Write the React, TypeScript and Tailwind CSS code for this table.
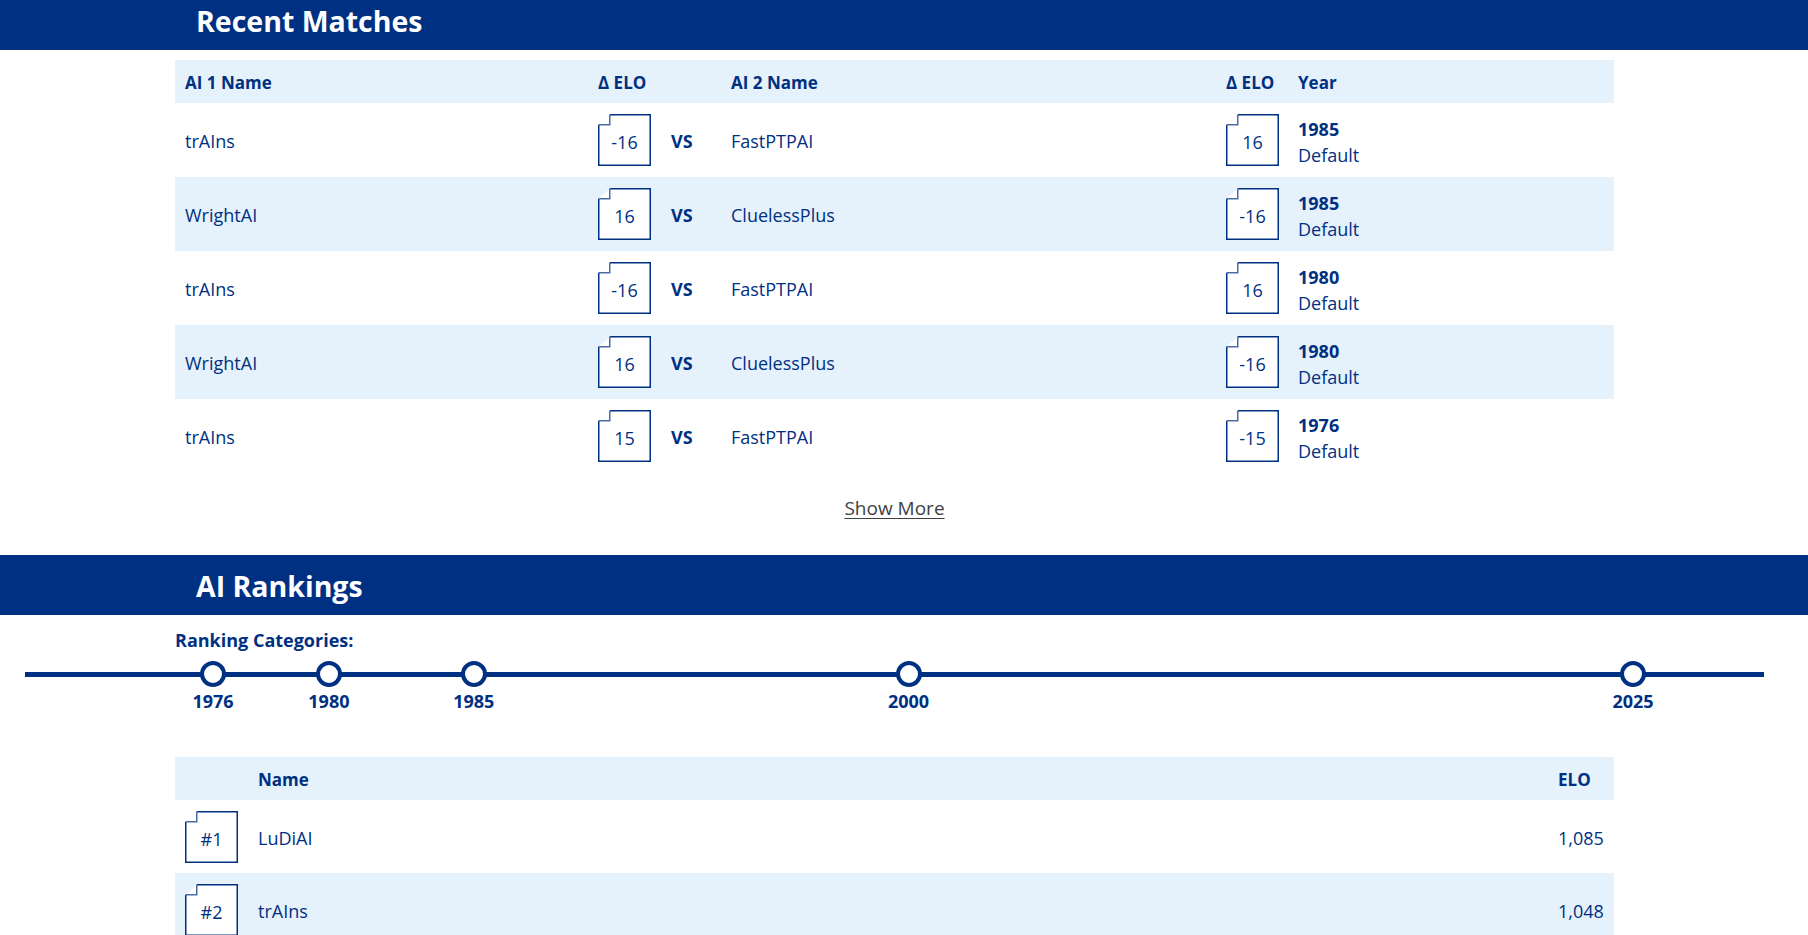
import React from 'react';

type Match = {
  ai1: string;
  d1: number;
  ai2: string;
  d2: number;
  year: number;
  category: string;
};

const matches: Match[] = [
  { ai1: 'trAIns', d1: -16, ai2: 'FastPTPAI', d2: 16, year: 1985, category: 'Default' },
  { ai1: 'WrightAI', d1: 16, ai2: 'CluelessPlus', d2: -16, year: 1985, category: 'Default' },
  { ai1: 'trAIns', d1: -16, ai2: 'FastPTPAI', d2: 16, year: 1980, category: 'Default' },
  { ai1: 'WrightAI', d1: 16, ai2: 'CluelessPlus', d2: -16, year: 1980, category: 'Default' },
  { ai1: 'trAIns', d1: 15, ai2: 'FastPTPAI', d2: -15, year: 1976, category: 'Default' },
];

const rankings = [
  { name: 'LuDiAI', elo: 1085 },
  { name: 'trAIns', elo: 1048 },
];

const years = [1976, 1980, 1985, 2000, 2025];

// timeline scale, px from the start of the line
const yearToX = (y: number) => 188 + (y - 1976) * 28.98;

function NotchBox({ children }: { children: React.ReactNode }) {
  return (
    <div className="relative flex h-[52px] w-[53px] shrink-0 items-center justify-center pt-[5px] text-[18px] text-[#003082]">
      <svg className="absolute inset-0" width="53" height="52" viewBox="0 0 53 52">
        <path d="M11.75 0.75 H52.25 V51.25 H0.75 V10.75" fill="white" stroke="#003082" strokeWidth="1.5" />
        <path d="M0.75 10.75 H11.75 V0.75" fill="none" stroke="#4a6aa8" strokeWidth="1.5" />
      </svg>
      <span className="relative">{children}</span>
    </div>
  );
}

function SectionBar({ title, className = '' }: { title: string; className?: string }) {
  return (
    <div className={`flex h-[60px] w-full items-center bg-[#003082] ${className}`}>
      <div className="ml-[175px] w-[1439px] pl-[21px]">
        <h2 className="pt-[2px] text-[28.5px] font-bold leading-[36px] text-white">{title}</h2>
      </div>
    </div>
  );
}

function RecentMatches() {
  return (
    <div className="ml-[175px] mt-[10px] w-[1439px] text-[#003082]">
      <div className="grid h-[43px] grid-cols-[413px_73px_60px_495px_72px_326px] items-center bg-[#e5f1fb] pt-[2px] text-[17px] font-bold">
        <div className="px-[10px]">AI 1 Name</div>
        <div className="px-[10px]">Δ ELO</div>
        <div className="px-[10px]"></div>
        <div className="px-[10px]">AI 2 Name</div>
        <div className="px-[10px]">Δ ELO</div>
        <div className="px-[10px]">Year</div>
      </div>
      {matches.map((m, i) => (
        <div
          key={i}
          className={`grid h-[74px] grid-cols-[413px_73px_60px_495px_72px_326px] items-center text-[18px] ${
            i % 2 === 1 ? 'bg-[#e5f1fb]' : 'bg-white'
          }`}
        >
          <div className="px-[10px] pt-[3px]">{m.ai1}</div>
          <div className="px-[10px]">
            <NotchBox>{m.d1}</NotchBox>
          </div>
          <div className="px-[10px] pt-[3px] font-bold">VS</div>
          <div className="px-[10px] pt-[3px]">{m.ai2}</div>
          <div className="px-[10px]">
            <NotchBox>{m.d2}</NotchBox>
          </div>
          <div className="flex flex-col px-[10px] pt-[3px] leading-[26px]">
            <span className="font-bold">{m.year}</span>
            <span>{m.category}</span>
          </div>
        </div>
      ))}
      <div className="mt-[22px] flex justify-center">
        <a href="#" className="text-[19px] leading-[26px] text-[#3f3f3f] underline underline-offset-[3px]">
          Show More
        </a>
      </div>
    </div>
  );
}

function Timeline() {
  return (
    <div className="relative ml-[25px] h-[105px] w-[1739px] text-[#003082]">
      <div className="absolute left-0 right-0 top-[20px] h-[5px] bg-[#003082]" />
      {years.map((y) => (
        <div
          key={y}
          className="absolute top-[9px] flex w-[60px] -translate-x-1/2 flex-col items-center"
          style={{ left: yearToX(y) }}
        >
          <div className="h-[26px] w-[26px] rounded-full border-[4px] border-[#003082] bg-white" />
          <span className="mt-[2px] text-[18px] font-bold leading-[24px]">{y}</span>
        </div>
      ))}
    </div>
  );
}

function Rankings() {
  return (
    <div className="ml-[175px] w-[1439px] text-[#003082]">
      <div className="grid h-[43px] grid-cols-[73px_1fr_66px] items-center bg-[#e5f1fb] pt-[2px] text-[17px] font-bold">
        <div className="px-[10px]"></div>
        <div className="px-[10px]">Name</div>
        <div className="px-[10px]">ELO</div>
      </div>
      {rankings.map((r, i) => (
        <div
          key={r.name}
          className={`grid h-[73px] grid-cols-[73px_1fr_66px] items-center text-[18px] ${
            i % 2 === 1 ? 'bg-[#e5f1fb]' : 'bg-white'
          }`}
        >
          <div className="px-[10px]">
            <NotchBox>#{i + 1}</NotchBox>
          </div>
          <div className="px-[10px] pt-[3px]">{r.name}</div>
          <div className="px-[10px] pt-[3px]">{r.elo.toLocaleString('en-US')}</div>
        </div>
      ))}
    </div>
  );
}

export default function App() {
  return (
    <div className="h-[935px] w-full overflow-hidden bg-white font-['Open_Sans',sans-serif]">
      <SectionBar title="Recent Matches" className="mt-[-10px]" />
      <RecentMatches />
      <SectionBar title="AI Rankings" className="mt-[34px]" />
      <div className="ml-[175px] mt-[13px] text-[18px] font-bold leading-[24px] text-[#003082]">
        Ranking Categories:
      </div>
      <Timeline />
      <Rankings />
    </div>
  );
}
